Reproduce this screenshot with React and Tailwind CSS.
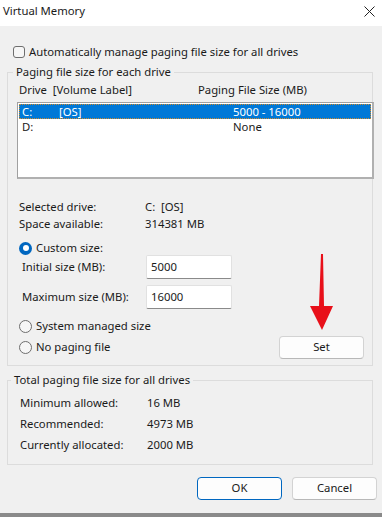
import React from "react";

const font = { fontFamily: '"Noto Sans", "Segoe UI", sans-serif' };

function Radio({ checked, label }) {
  return (
    <div className="flex items-center h-[16px]">
      {checked ? (
        <span className="w-[13px] h-[13px] rounded-full bg-[#0067c0] flex items-center justify-center">
          <span className="w-[6px] h-[6px] rounded-full bg-white" />
        </span>
      ) : (
        <span className="w-[13px] h-[13px] rounded-full border border-[#6e6e6e] bg-[#f6f6f6]" />
      )}
      <span className="ml-[4px]">{label}</span>
    </div>
  );
}

function Button({ children, primary, className = "" }) {
  return (
    <button
      className={
        "h-[23px] w-[85px] rounded-[4px] bg-[#fdfdfd] text-[11.3px] text-[#1a1a1a] " +
        (primary
          ? "border border-[#0067c0] "
          : "border border-[#d3d3d3] border-b-[#b8b8b8] ") +
        className
      }
    >
      {children}
    </button>
  );
}

export default function App() {
  return (
    <div
      className="w-[382px] h-[517px] bg-[#f0f0f0] text-[11.3px] text-[#1a1a1a] flex flex-col relative overflow-hidden"
      style={font}
    >
      {/* title bar */}
      <div className="h-[26px] bg-white flex items-center justify-between pl-[3px] pr-[7px] shrink-0">
        <span className="leading-[16px] -mt-[4px]">Virtual Memory</span>
        <svg width="11" height="11" viewBox="0 0 11 11" className="-mt-[4px]">
          <path d="M0.5 0.5 L10.5 10.5 M10.5 0.5 L0.5 10.5" stroke="#222" strokeWidth="1" />
        </svg>
      </div>

      {/* auto manage */}
      <div className="flex items-center h-[16px] mt-[18px] pl-[13px]">
        <span className="w-[12px] h-[12px] rounded-[3px] border border-[#6e6e6e] bg-[#f6f6f6]" />
        <span className="ml-[4px] leading-[16px]">Automatically manage paging file size for all drives</span>
      </div>

      {/* paging file size for each drive */}
      <fieldset className="ml-[7px] w-[366px] mt-[4px] border border-[#dcdcdc] pl-[9px] pr-[8px] pb-[7px]">
        <legend className="-ml-[4px] px-[3px] leading-[16px]">Paging file size for each drive</legend>
        <div className="flex leading-[16px] mt-[2px] ml-[2px]">
          <span className="w-[179px]">Drive&nbsp; [Volume Label]</span>
          <span>Paging File Size (MB)</span>
        </div>
        <div className="mt-[4px] h-[77px] w-[357px] -mr-[10px] bg-white border border-[#a0a0a0] border-r-2 border-b-2 border-r-[#b0b0b0] border-b-[#b0b0b0] p-px">
          <div className="h-[15px] bg-[#0078d7] text-white flex items-center leading-[14px] outline outline-1 outline-dotted outline-[#d08a2c] -outline-offset-1">
            <span className="pl-[3px] w-[40px]">C:</span>
            <span className="w-[174px]">[OS]</span>
            <span>5000 - 16000</span>
          </div>
          <div className="h-[15px] flex items-center leading-[14px]">
            <span className="pl-[3px] w-[214px]">D:</span>
            <span>None</span>
          </div>
        </div>

        <div className="mt-[19px] ml-[2px] leading-[17px]">
          <div className="flex">
            <span className="w-[126px]">Selected drive:</span>
            <span>C:&nbsp; [OS]</span>
          </div>
          <div className="flex">
            <span className="w-[126px]">Space available:</span>
            <span>314381 MB</span>
          </div>
        </div>

        <div className="mt-[8px] ml-[2px]">
          <Radio checked label="Custom size:" />
        </div>
        <div className="flex items-center -mt-[1px] ml-[5px]">
          <span className="w-[124px]">Initial size (MB):</span>
          <div className="h-[24px] w-[86px] bg-white border border-[#e1e1e1] border-b-[#8a8a8a] pl-[4px] flex items-center rounded-[2px]">
            5000
          </div>
        </div>
        <div className="flex items-center mt-[6px] ml-[5px]">
          <span className="w-[124px]">Maximum size (MB):</span>
          <div className="h-[24px] w-[86px] bg-white border border-[#e1e1e1] border-b-[#8a8a8a] pl-[4px] flex items-center rounded-[2px]">
            16000
          </div>
        </div>
        <div className="mt-[9px] ml-[2px]">
          <Radio label="System managed size" />
        </div>
        <div className="mt-[2px] ml-[2px] flex items-center justify-between h-[22px]">
          <Radio label="No paging file" />
          <Button className="h-[22px] w-[84px]">Set</Button>
        </div>
      </fieldset>

      {/* total paging file size */}
      <fieldset className="ml-[7px] w-[366px] mt-[6px] border border-[#dcdcdc] pl-[12px] pb-[9px]">
        <legend className="-ml-[9px] px-[3px] leading-[16px]">Total paging file size for all drives</legend>
        <div className="pt-[4px] leading-[21px]">
          <div className="flex">
            <span className="w-[127px]">Minimum allowed:</span>
            <span>16 MB</span>
          </div>
          <div className="flex">
            <span className="w-[127px]">Recommended:</span>
            <span>4973 MB</span>
          </div>
          <div className="flex">
            <span className="w-[127px]">Currently allocated:</span>
            <span>2000 MB</span>
          </div>
        </div>
      </fieldset>

      <div className="flex justify-end gap-[10px] mt-[12px] pr-[5px]">
        <Button primary>OK</Button>
        <Button>Cancel</Button>
      </div>

      <div className="mt-auto h-[4px] bg-[#8a8a8a]" />

      {/* red annotation arrow */}
      <svg
        className="absolute left-[306px] top-[252px]"
        width="30"
        height="82"
        viewBox="0 0 30 82"
      >
        <path d="M15 2 L17 2 L18 54 L27 54 L16 78 L4 54 L13 54 Z" fill="#e8101a" />
      </svg>
    </div>
  );
}
